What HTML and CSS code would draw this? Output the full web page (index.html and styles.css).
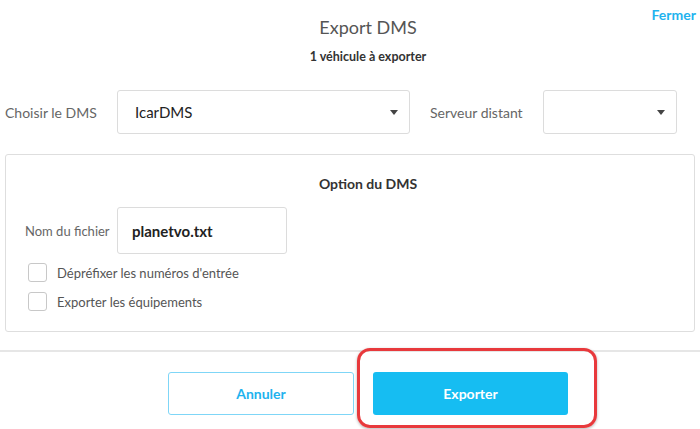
FILE: index.html
```html
<!DOCTYPE html>
<html lang="fr">
<head>
    <meta charset="UTF-8">
    <meta name="viewport" content="width=device-width, initial-scale=1.0">
    <title>Export DMS</title>
    <link rel="stylesheet" href="styles.css">
</head>
<body>

<div class="modal">
    <!-- Header -->
    <div class="header">
        <h1>Export DMS</h1>
        <p class="subtitle">1 véhicule à exporter</p>
        <a class="close" href="#">Fermer</a>
    </div>

    <!-- DMS choice -->
    <div class="choice-row">
        <label class="row-label" for="dms">Choisir le DMS</label>
        <div class="select select-dms" id="dms">
            <span>IcarDMS</span>
            <span class="caret"></span>
        </div>
        <label class="row-label server-label" for="server">Serveur distant</label>
        <div class="select select-server" id="server">
            <span></span>
            <span class="caret"></span>
        </div>
    </div>

    <!-- Options -->
    <div class="options">
        <h2>Option du DMS</h2>
        <div class="file-row">
            <label class="file-label" for="filename">Nom du fichier</label>
            <div class="file-input" id="filename">planetvo.txt</div>
        </div>
        <label class="check-row"><span class="check"></span>Dépréfixer les numéros d'entrée</label>
        <label class="check-row"><span class="check"></span>Exporter les équipements</label>
    </div>

    <!-- Footer -->
    <div class="footer">
        <button class="btn btn-cancel">Annuler</button>
        <button class="btn btn-export">Exporter</button>
        <div class="highlight"></div>
    </div>
</div>

</body>
</html>
```

FILE: styles.css
```css
/* Page */
body {
    margin: 0;
    background: #fff;
    font-family: Lato, "Open Sans", sans-serif;
    color: #555;
}

.modal {
    width: 700px;
    height: 429px;
    overflow: hidden;
}

/* Header */
.header {
    position: relative;
    padding: 14px 0 0 36px;
    text-align: center;
}

.header h1 {
    margin: 0;
    font-size: 18px;
    line-height: 26px;
    font-weight: 400;
    color: #555;
}

.subtitle {
    margin: 8px 0 0;
    font-size: 12.5px;
    line-height: 18px;
    font-weight: 700;
    color: #333;
}

.close {
    position: absolute;
    top: 6px;
    right: 4px;
    font-size: 14px;
    font-weight: 700;
    color: #1fb3ee;
    text-decoration: none;
}

/* Choice row */
.choice-row {
    display: flex;
    align-items: center;
    margin-top: 24px;
    padding-left: 5px;
}

.row-label {
    width: 112px;
    font-size: 14px;
    color: #666;
}

.server-label {
    width: 113px;
    margin-left: 20px;
}

.select {
    box-sizing: border-box;
    height: 44px;
    display: flex;
    align-items: center;
    justify-content: space-between;
    padding: 0 11px 0 17px;
    border: 1px solid #dcdcdc;
    border-radius: 3px;
    font-size: 15px;
    color: #222;
}

.select-dms {
    width: 293px;
}

.select-server {
    width: 134px;
}

.caret {
    width: 0;
    height: 0;
    border-left: 4px solid transparent;
    border-right: 4px solid transparent;
    border-top: 5px solid #444;
}

/* Options panel */
.options {
    box-sizing: border-box;
    height: 178px;
    margin: 20px 5px 0;
    padding: 20px 0 0;
    border: 1px solid #dedede;
    border-radius: 3px;
}

.options h2 {
    margin: 0 0 14px;
    padding-left: 36px;
    text-align: center;
    font-size: 14px;
    line-height: 18px;
    font-weight: 700;
    color: #333;
}

.file-row {
    display: flex;
    align-items: center;
    padding-left: 19px;
    margin-bottom: 4px;
}

.file-label {
    width: 92px;
    font-size: 13px;
    color: #666;
}

.file-input {
    box-sizing: border-box;
    width: 170px;
    height: 47px;
    display: flex;
    align-items: center;
    padding-left: 14px;
    border: 1px solid #dcdcdc;
    border-radius: 3px;
    font-size: 15px;
    font-weight: 700;
    color: #222;
}

.check-row {
    display: flex;
    align-items: center;
    height: 29px;
    padding-left: 22px;
    font-size: 13px;
    color: #555;
}

.check {
    box-sizing: border-box;
    width: 19px;
    height: 19px;
    margin-right: 10px;
    border: 1px solid #c8c8c8;
    border-radius: 3px;
}

/* Footer */
.footer {
    position: relative;
    display: flex;
    justify-content: center;
    gap: 19px;
    margin-top: 18px;
    padding: 20px 0 0 36px;
    border-top: 2px solid #e6e6e6;
}

.btn {
    box-sizing: border-box;
    height: 43px;
    border-radius: 3px;
    font-family: inherit;
    font-size: 14px;
    font-weight: 700;
    cursor: pointer;
}

.btn-cancel {
    width: 186px;
    background: #fff;
    border: 1px solid #7fd6f7;
    color: #1fb3ee;
}

.btn-export {
    width: 195px;
    background: #16bdf2;
    border: none;
    color: #fff;
}

/* Red annotation */
.highlight {
    position: absolute;
    left: 357px;
    top: -4px;
    width: 240px;
    height: 80px;
    box-sizing: border-box;
    border: 3px solid #e8393c;
    border-radius: 13px;
    box-shadow: 0 1px 3px rgba(0, 0, 0, 0.3);
}
```
